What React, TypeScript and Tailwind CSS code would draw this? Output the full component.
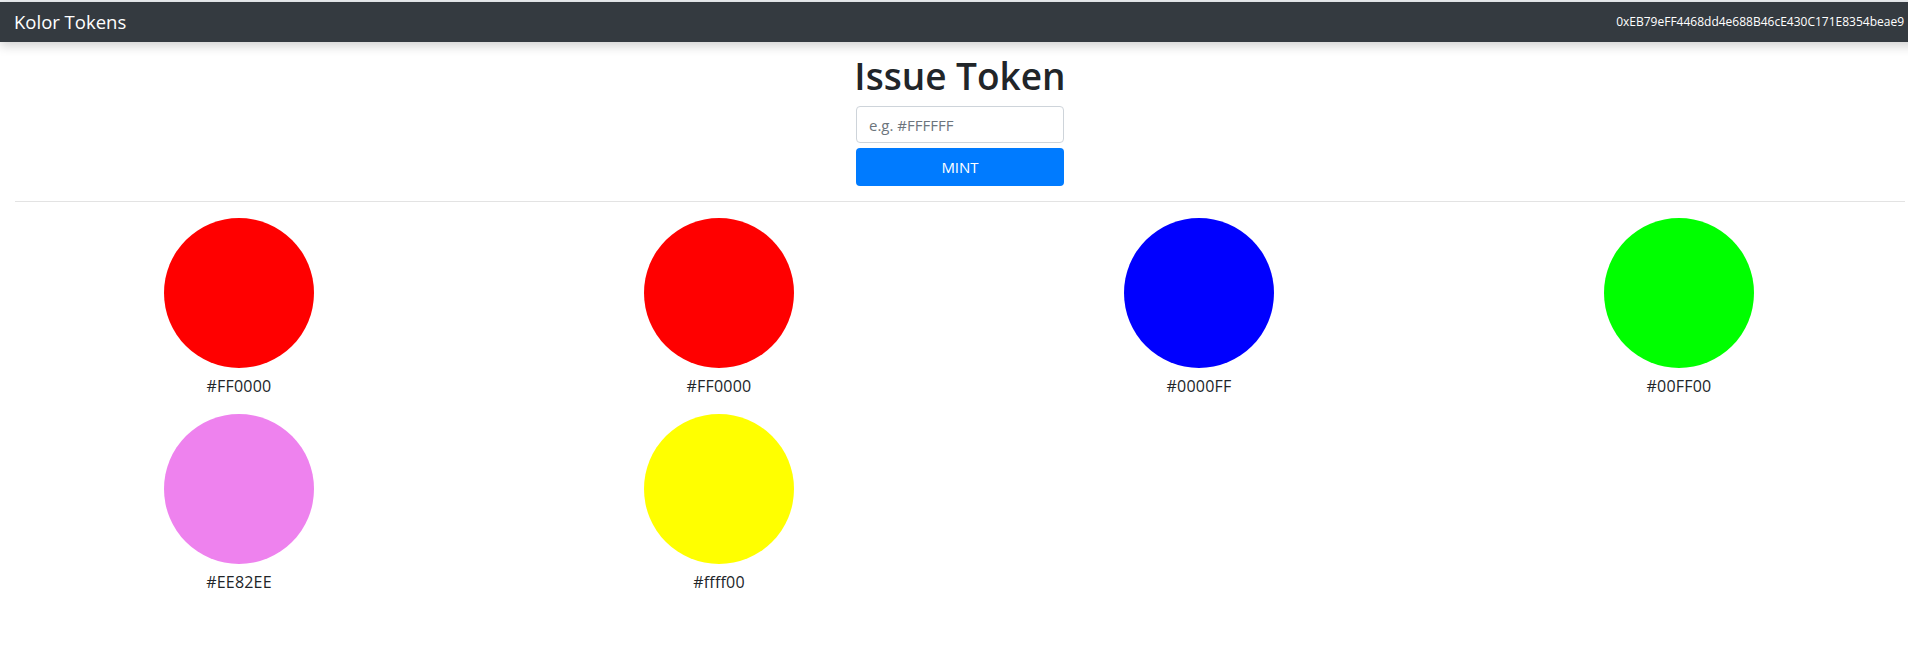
import React from "react";

const tokens = ["#FF0000", "#FF0000", "#0000FF", "#00FF00", "#EE82EE", "#ffff00"];

export default function App() {
  return (
    <div className="w-full min-h-[671px] bg-white overflow-hidden">
      <div className="w-[1920px] text-[#212529]" style={{ fontFamily: '"Open Sans", "Noto Sans", sans-serif' }}>
        <div className="h-[2px] bg-[#e9ecef]" />
        <nav className="h-[40px] bg-[#343a40] flex items-center justify-between pl-[14px] pr-[16px] shadow-[0_4px_10px_rgba(0,0,0,0.18)] relative">
          <span className="text-white text-[18.5px] leading-none">Kolor Tokens</span>
          <span className="text-white text-[12px] leading-none">0xEB79eFF4468dd4e688B46cE430C171E8354beae9</span>
        </nav>
        <div className="px-[15px]">
          <div className="flex flex-col items-center pt-[10px]">
            <h1 className="text-[37px] font-semibold leading-[48px]">Issue Token</h1>
            <input
              className="w-[208px] h-[37px] mt-[6px] border border-[#ced4da] rounded-[4px] px-[12px] text-[15px] placeholder:text-[#6c757d] outline-none"
              placeholder="e.g. #FFFFFF"
            />
            <button className="w-[208px] h-[38px] mt-[5px] bg-[#007bff] text-white rounded-[4px] text-[15px]">MINT</button>
          </div>
          <hr className="mt-[15px] border-t border-[#e3e3e3]" />
        </div>
        <div className="grid grid-cols-[480px_480px_480px_480px] ml-[-1px] mt-[16px] gap-y-[16px]">
          {tokens.map((c, i) => (
            <div key={i} className="flex flex-col items-center">
              <div className="w-[150px] h-[150px] rounded-full" style={{ backgroundColor: c }} />
              <div className="text-[16px] leading-[24px] mt-[6px] tracking-[0.2px]">{c}</div>
            </div>
          ))}
        </div>
      </div>
    </div>
  );
}
